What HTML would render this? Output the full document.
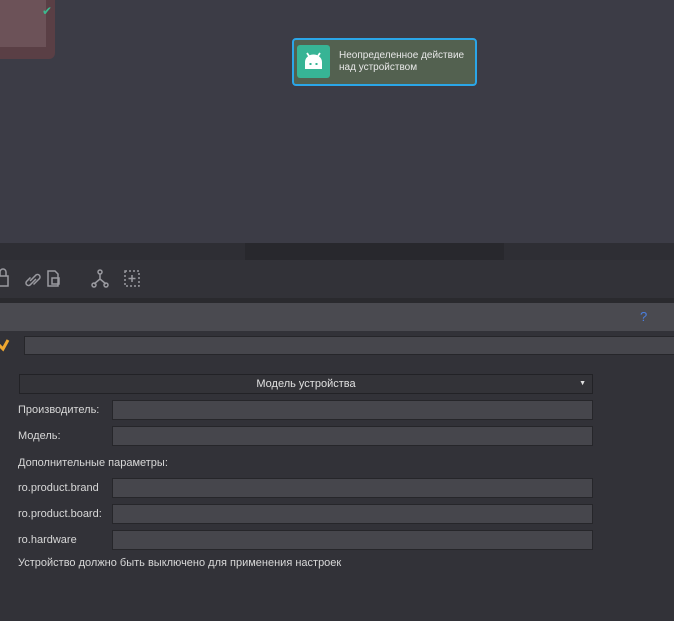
<html><head><style>
body{margin:0;width:674px;height:621px;overflow:hidden;background:#323238;font-family:"Liberation Sans",sans-serif;font-size:11px;color:#d8d8d8;position:relative}
div{position:absolute;box-sizing:border-box}
.in{background:#46464c;border:1px solid #26262a;left:112px;width:481px;height:20px}
.l{left:18px}
</style></head><body>
<div style="left:0;top:0;width:674px;height:243px;background:#3c3c46"></div>
<div style="left:0;top:0;width:55px;height:59px;background:#5a3f45;border-radius:0 0 6px 0"></div>
<div style="left:0;top:0;width:46px;height:47px;background:#6c5258"></div>
<div style="left:42px;top:4px;color:#3cba8f;font-size:12px">✔</div>
<div style="left:292px;top:38px;width:185px;height:48px;background:#536150;border:2px solid #2ba6e8;border-radius:4px"></div>
<div style="left:297px;top:45px;width:33px;height:33px;background:#37b495;border-radius:3px">
<svg width="33" height="33" viewBox="0 0 33 33"><path d="M8 24 V17 a8.5 7.5 0 0 1 17 0 V24 Z" fill="#fff"/><path d="M10 8 l3 4.5 M23 8 l-3 4.5" stroke="#fff" stroke-width="1.8"/><rect x="12.5" y="18" width="2" height="2" fill="#37b495"/><rect x="18.5" y="18" width="2" height="2" fill="#37b495"/></svg></div>
<div style="left:339px;top:50px;font-size:10px;color:#e8e8e8;line-height:12px">Неопределенное действие<br>над устройством</div>
<div style="left:0;top:243px;width:674px;height:17px;background:#2e2e34"></div>
<div style="left:245px;top:243px;width:259px;height:17px;background:#28282d"></div>
<div style="left:0;top:298px;width:674px;height:5px;background:#2a2a2e"></div>
<div style="left:0;top:303px;width:674px;height:28px;background:#4a4a50"></div>
<div style="left:640px;top:309px;color:#4a7fe0;font-size:13px">?</div>
<svg style="position:absolute;left:0;top:268px" width="150" height="24" fill="none" stroke="#9a9aa0" stroke-width="1.5"><rect x="-3" y="8" width="11" height="10"/><path d="M0 8 V4 a3 3 0 0 1 6 0 V8"/><path d="M30 13 l6-6 a2.5 2.5 0 0 1 3.5 3.5 l-6 6 M36 11 l-6 6 a2.5 2.5 0 0 1-3.5-3.5 l4-4"/><path d="M48 3 h7 l3 3 v12 h-10 Z"/><rect x="52" y="10" width="7" height="6"/><circle cx="100" cy="4" r="2"/><path d="M100 6 V11 L94 16 M100 11 L106 16"/><circle cx="94" cy="17" r="2"/><circle cx="106" cy="17" r="2"/><rect x="125" y="3" width="14" height="15" stroke-dasharray="2 2"/><path d="M132 7 V14 M128.5 10.5 H135.5"/></svg>
<svg style="position:absolute;left:0;top:338px" width="10" height="14"><path d="M-2 6 L3 11 L8 2" stroke="#f0a830" stroke-width="3" fill="none"/></svg>
<div style="left:24px;top:336px;width:660px;height:19px;background:#46464c;border:1px solid #26262a"></div>
<div style="left:19px;top:374px;width:574px;height:20px;background:#333338;border:1px solid #222226;text-align:center;line-height:18px;color:#e0e0e0">Модель устройства<span style="position:absolute;right:6px;font-size:7px">▼</span></div>
<div class="l" style="top:404px">Производитель:</div><div class="in" style="top:400px"></div>
<div class="l" style="top:430px">Модель:</div><div class="in" style="top:426px"></div>
<div class="l" style="top:457px">Дополнительные параметры:</div>
<div class="l" style="top:482px">ro.product.brand</div><div class="in" style="top:478px"></div>
<div class="l" style="top:508px">ro.product.board:</div><div class="in" style="top:504px"></div>
<div class="l" style="top:534px">ro.hardware</div><div class="in" style="top:530px"></div>
<div class="l" style="top:557px">Устройство должно быть выключено для применения настроек</div>
</body></html>
